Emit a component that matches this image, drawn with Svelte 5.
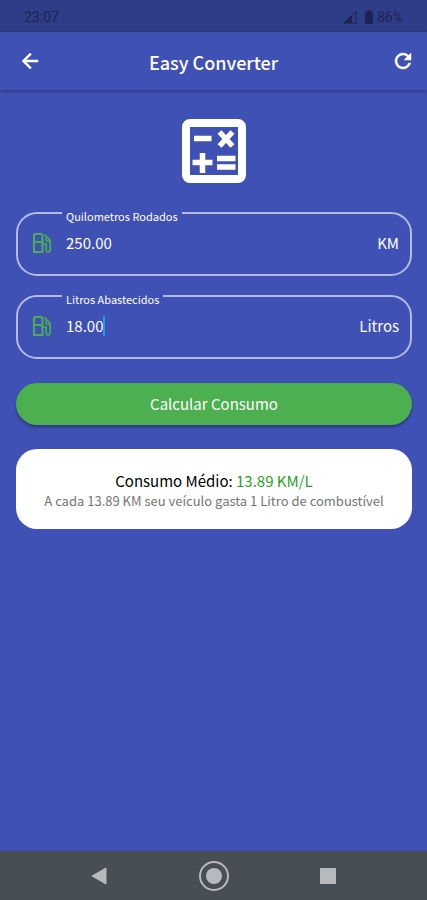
<script>
  let km = $state('250.00');
  let litros = $state('18.00');
  let media = $state('13.89');
  let active = $state('litros');

  function calcular() {
    const value = parseFloat(km) / parseFloat(litros);
    if (Number.isFinite(value)) media = value.toFixed(2);
  }

  function limpar() {
    km = '';
    litros = '';
  }
</script>

{#snippet pump()}
  <svg class="pump" viewBox="0 0 20 22" aria-hidden="true">
    <path d="M2 20V3.500Q2 2 3.500 2H9Q10.500 2 10.500 3.500V20ZM2 10H10.500" />
    <path d="M12.500 2.500L17 7Q18.200 8.200 18.200 10V17.500Q18.200 20 16.200 20T14.200 17.500V12H10.500M14 5.500V7.500Q14 9.500 17.500 9.500" stroke-width="1.600" />
  </svg>
{/snippet}

<div class="screen">
  <div class="status">
    <span>23:07</span>
    <div class="status-right">
      <svg class="signal" viewBox="0 0 14 14" aria-hidden="true">
        <path d="M1 13L13 1V13Z" fill="none" stroke="currentColor" />
        <path d="M1 13L9 5V13Z" fill="currentColor" />
      </svg>
      <svg class="battery" viewBox="0 0 8 14" aria-hidden="true">
        <path d="M2.500 0H5.500V1.500H7Q8 1.500 8 2.500V13Q8 14 7 14H1Q0 14 0 13V2.500Q0 1.500 1 1.500H2.500Z" fill="currentColor" />
      </svg>
      <span>86%</span>
    </div>
  </div>

  <header>
    <button class="icon-btn" aria-label="Voltar">
      <svg viewBox="0 0 24 24"><path d="M20 11H7.830l5.590-5.590L12 4l-8 8 8 8 1.410-1.410L7.830 13H20z" /></svg>
    </button>
    <h1>Easy Converter</h1>
    <button class="icon-btn" aria-label="Limpar" onclick={limpar}>
      <svg viewBox="0 0 24 24"><path d="M17.650 6.350A7.960 7.960 0 0 0 12 4a8 8 0 1 0 7.730 10h-2.080A6 6 0 1 1 12 6c1.660 0 3.140.690 4.220 1.780L13 11h7V4z" /></svg>
    </button>
  </header>

  <main>
    <svg class="calc" viewBox="0 0 64 64" aria-hidden="true">
      <rect x="4" y="4" width="56" height="56" rx="4" fill="none" stroke="#fff" stroke-width="8" />
      <path d="M12 19.500H29.500M20.500 34V54M10.500 43.500H30.500M35 39.500H53.500M35 48H53.500M37.500 13L50.500 27M50.500 13L37.500 27" stroke="#fff" stroke-width="5.500" fill="none" />
    </svg>

    <fieldset>
      <legend><label for="km">Quilometros Rodados</label></legend>
      <div class="row">
        {@render pump()}
        <div class="value">
          <input id="km" inputmode="decimal" bind:value={km} onfocus={() => (active = 'km')} />
          {#if active === 'km'}<span class="caret"></span>{/if}
        </div>
        <span>KM</span>
      </div>
    </fieldset>

    <fieldset>
      <legend><label for="litros">Litros Abastecidos</label></legend>
      <div class="row">
        {@render pump()}
        <div class="value">
          <input id="litros" inputmode="decimal" bind:value={litros} onfocus={() => (active = 'litros')} />
          {#if active === 'litros'}<span class="caret"></span>{/if}
        </div>
        <span>Litros</span>
      </div>
    </fieldset>

    <button class="submit" onclick={calcular}>Calcular Consumo</button>

    <section class="result">
      <p class="total">Consumo Médio: <span>{media} KM/L</span></p>
      <p class="detail">A cada {media} KM seu veículo gasta 1 Litro de combustível</p>
    </section>
  </main>

  <nav>
    <button aria-label="Voltar">
      <svg viewBox="0 0 32 32"><path d="M9 16L23 8V24Z" fill="#b5bbbd" stroke="#b5bbbd" stroke-linejoin="round" /></svg>
    </button>
    <button aria-label="Início">
      <svg viewBox="0 0 32 32">
        <circle cx="16" cy="16" r="14" fill="none" stroke="#b5bbbd" stroke-width="2" />
        <circle cx="16" cy="16" r="8" fill="#b5bbbd" />
      </svg>
    </button>
    <button aria-label="Recentes">
      <svg viewBox="0 0 32 32"><rect x="8" y="8" width="16" height="16" rx="1" fill="#b5bbbd" /></svg>
    </button>
  </nav>
</div>

<style>
  :global(body) {
    background: #3f51b5;
  }
  .screen {
    display: flex;
    flex-direction: column;
    min-height: 100vh;
    background: #3f51b5;
    color: #fff;
    font: 15px/24px "Noto Sans CJK JP", "Noto Sans", sans-serif;
  }
  button,
  input {
    font: inherit;
    color: inherit;
    border: 0;
    padding: 0;
    background: none;
  }
  svg {
    display: block;
  }
  .status {
    display: flex;
    justify-content: space-between;
    align-items: center;
    height: 32px;
    padding: 1px 24px 0;
    box-sizing: border-box;
    background: #2f3d88;
    color: #1b2452;
    font: 14px/20px Roboto, sans-serif;
  }
  .status-right {
    display: flex;
    align-items: center;
  }
  .signal {
    width: 14px;
    height: 14px;
    margin-right: 8px;
  }
  .battery {
    width: 8px;
    height: 14px;
    margin-right: 4px;
  }
  header {
    display: flex;
    align-items: center;
    height: 58px;
    padding: 0 6px 0 12px;
    box-shadow: 0 1px 4px rgba(0, 0, 0, 0.35);
  }
  h1 {
    flex: 1;
    margin: 0;
    padding: 2px 6px 0 0;
    font-size: 18px;
    font-weight: 500;
    text-align: center;
  }
  .icon-btn svg {
    width: 24px;
    height: 24px;
    fill: #fff;
    stroke: #fff;
    stroke-width: 0.5;
  }
  .icon-btn {
    display: grid;
    place-items: center;
    width: 36px;
    height: 36px;
  }
  main {
    flex: 1;
    padding: 29px 15px 24px 16px;
  }
  .calc {
    width: 64px;
    height: 64px;
    margin: 0 auto 20px;
  }
  fieldset {
    min-width: 0;
    margin: 0 0 10px;
    padding: 0 11px 17px 14px;
    border: 2px solid #b3bbe5;
    border-radius: 21px;
  }
  legend {
    margin-left: 30px;
    padding: 6px 4px 0;
    font-size: 11px;
    line-height: 14px;
  }
  legend label {
    display: block;
  }
  .row {
    display: flex;
    align-items: center;
    height: 34px;
    padding-top: 5px;
    box-sizing: border-box;
  }
  .pump {
    width: 20px;
    height: 22px;
    margin-right: 14px;
    fill: none;
    stroke: #4caf50;
    stroke-width: 2;
  }
  .value {
    display: flex;
    align-items: center;
    flex: 1;
    min-width: 0;
  }
  input {
    field-sizing: content;
    min-width: 4px;
    max-width: 100%;
    height: 24px;
    outline: 0;
    caret-color: transparent;
  }
  .caret {
    width: 2px;
    height: 20px;
    background: #2196f3;
  }
  .submit {
    display: block;
    width: 100%;
    height: 42px;
    margin: 24px 0;
    border-radius: 21px;
    background: #4caf50;
    box-shadow: 0 2px 3px rgba(0, 0, 0, 0.35);
  }
  .result {
    padding: 20px 16px;
    border-radius: 21px;
    background: #fff;
    text-align: center;
  }
  p {
    margin: 0;
  }
  .total {
    color: #000;
  }
  .total span {
    color: #1fa324;
  }
  .detail {
    color: #757575;
    font-size: 13px;
    line-height: 16px;
  }
  nav {
    display: flex;
    justify-content: space-between;
    align-items: center;
    height: 49px;
    padding: 0 83px;
    background: #474f54;
  }
  nav svg {
    width: 32px;
    height: 32px;
  }
</style>
